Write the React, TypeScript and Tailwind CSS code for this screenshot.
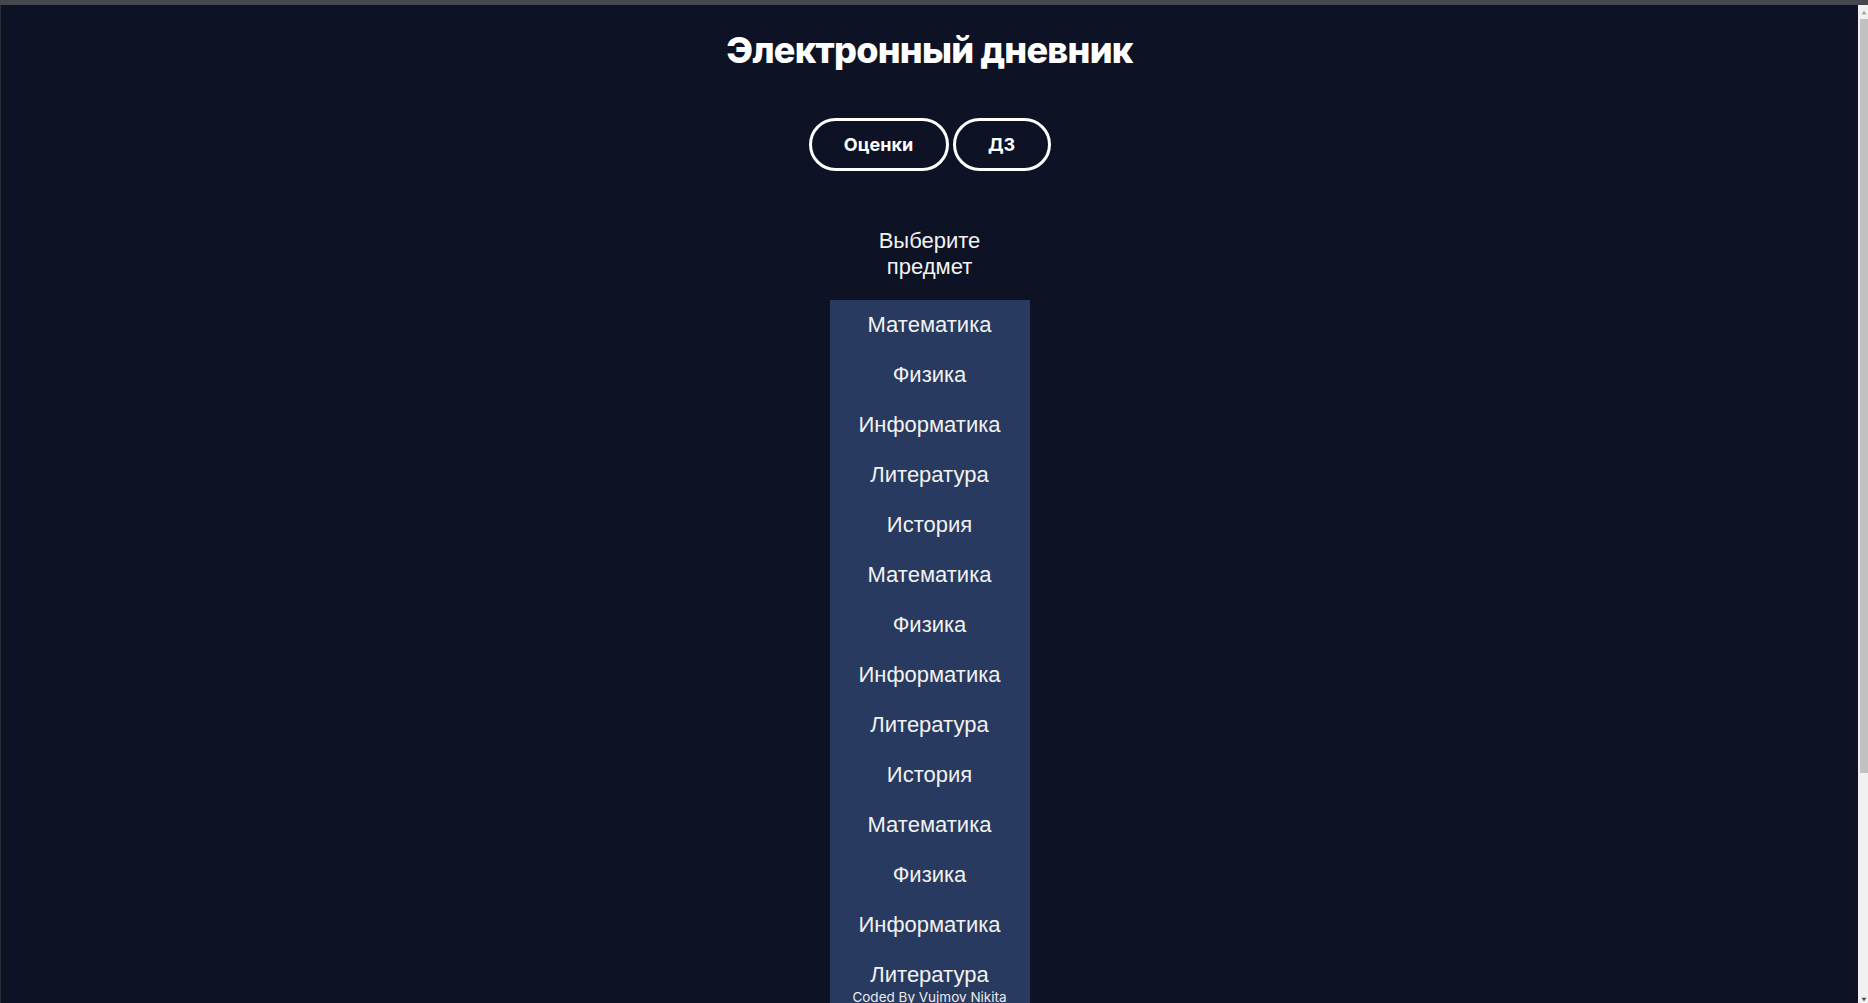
const subjects = ["Математика", "Физика", "Информатика", "Литература", "История"];

// the list repeats four times in the original page
const items = [...subjects, ...subjects, ...subjects, ...subjects];

export default function App() {
  return (
    <div className="flex h-[1003px] w-full flex-col overflow-hidden bg-[#46464f]">
      <div className="h-[5px] shrink-0" />
      <div className="flex min-h-0 flex-1">
        <div className="w-px shrink-0 bg-[#2c2c36]" />
        <div className="min-w-0 flex-1 overflow-hidden bg-[#0d1325]">
          <div className="relative flex flex-col items-center">
            <h1 className="mt-[25px] text-[36px] leading-[40px] font-extrabold tracking-[-0.75px] text-white font-['Inter',sans-serif]">
              Электронный дневник
            </h1>

            <div className="mt-[48px] flex gap-[4px] font-['Inter',sans-serif]">
              <button className="flex h-[53px] w-[140px] items-center justify-center rounded-full border-[3px] border-white text-[18px] font-bold text-white">
                Оценки
              </button>
              <button className="flex h-[53px] w-[98px] items-center justify-center rounded-full border-[3px] border-white text-[18px] font-bold text-white">
                ДЗ
              </button>
            </div>

            <p className="mt-[57px] w-[130px] text-center text-[22px] leading-[26px] text-[#f2f2f2] font-['Liberation_Sans',Arial,sans-serif]">
              Выберите предмет
            </p>

            <ul className="mt-[20px] w-[200px] bg-[#283a5f] font-['Liberation_Sans',Arial,sans-serif]">
              {items.map((s, i) => (
                <li
                  key={i}
                  className="flex h-[50px] items-center justify-center text-[22px] leading-[26px] text-[#f2f2f2]"
                >
                  {s}
                </li>
              ))}
            </ul>

            <div className="absolute top-[982px] left-1/2 -translate-x-1/2 whitespace-nowrap text-[13.5px] leading-[20px] text-[#ececec] font-['Inter',sans-serif]">
              Coded By Vujmov Nikita
            </div>
          </div>
        </div>

        {/* window scrollbar */}
        <div className="flex w-[10px] shrink-0 flex-col bg-[#f1f1f1] pl-[2px]">
          <svg viewBox="0 0 8 6" className="mt-[5px] h-[5px] w-[8px]">
            <path d="M1 5 L4 1 L7 5 Z" fill="#a3a3a3" />
          </svg>
          <div className="mt-[4px] h-[754px] bg-[#c1c1c1]" />
          <div className="flex-1" />
          <svg viewBox="0 0 8 6" className="mb-[1px] h-[5px] w-[8px]">
            <path d="M1 1 L4 5 L7 1 Z" fill="#505050" />
          </svg>
        </div>
      </div>
    </div>
  );
}
